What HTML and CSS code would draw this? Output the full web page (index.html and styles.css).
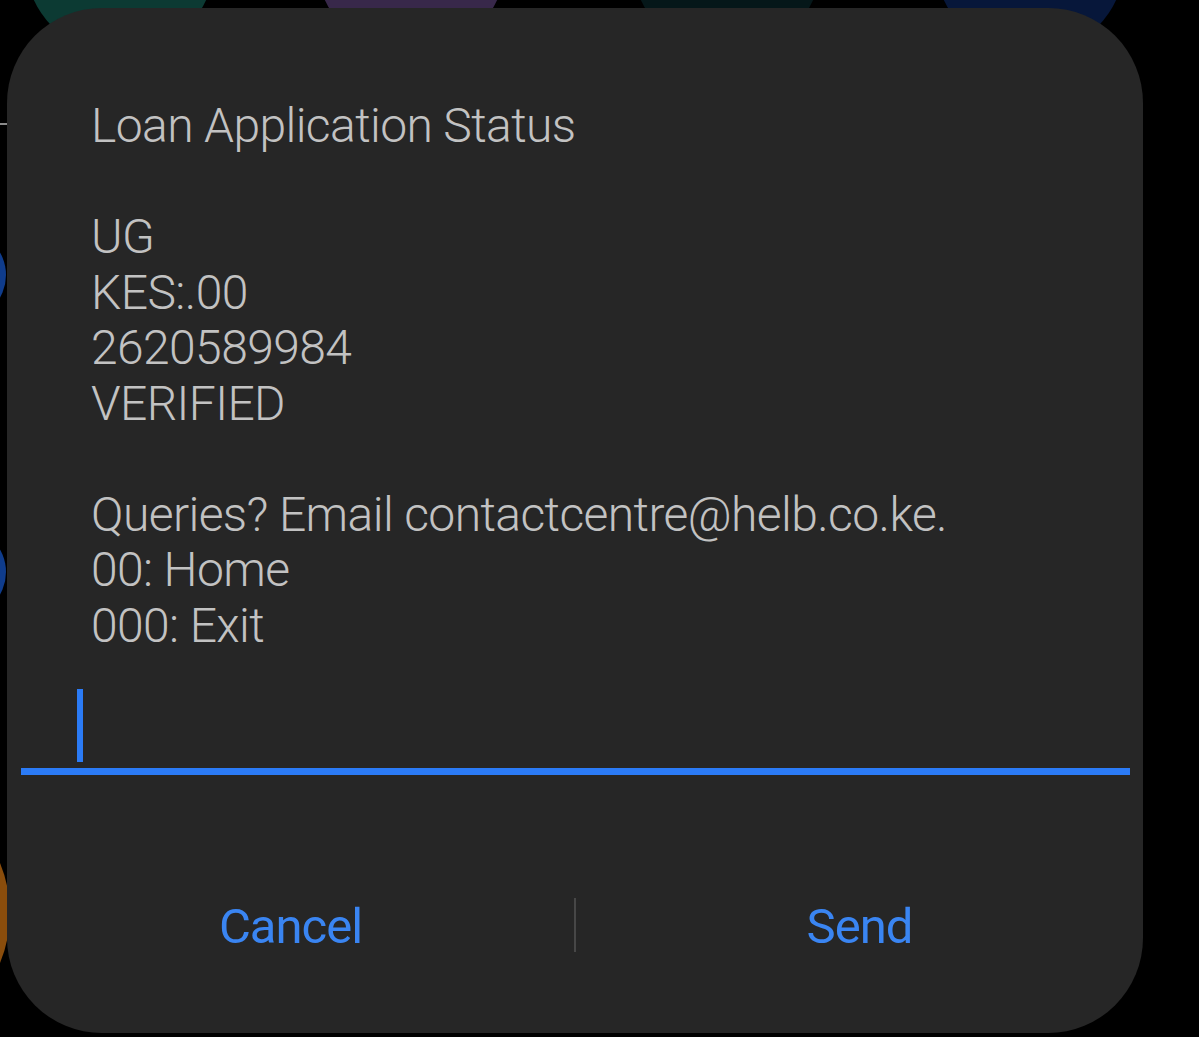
FILE: index.html
```html
<!DOCTYPE html>
<html lang="en">
<head>
  <meta charset="UTF-8">
  <title>Loan Application Status</title>
  <link rel="stylesheet" href="styles.css">
</head>
<body>

  <!-- iconos de la pantalla de inicio, detrás del diálogo -->
  <div class="fondo">
    <span class="icono verde"></span>
    <span class="icono morado"></span>
    <span class="icono turquesa"></span>
    <span class="icono azul-oscuro"></span>
    <span class="icono lado azul1"></span>
    <span class="icono lado azul2"></span>
    <span class="icono lado naranja"></span>
    <span class="marca"></span>
  </div>

  <div class="dialogo">
    <div class="mensaje">
      <div>Loan Application Status</div>
      <div>&nbsp;</div>
      <div>UG</div>
      <div>KES:.00</div>
      <div>2620589984</div>
      <div>VERIFIED</div>
      <div>&nbsp;</div>
      <div>Queries? Email contactcentre@helb.co.ke.</div>
      <div>00: Home</div>
      <div>000: Exit</div>
    </div>

    <div class="campo">
      <span class="cursor"></span>
    </div>

    <div class="botones">
      <button>Cancel</button>
      <span class="separador"></span>
      <button>Send</button>
    </div>
  </div>

</body>
</html>
```

FILE: styles.css
```css
body {
  margin: 0;
  background-color: #000;
  font-family: Roboto, "Liberation Sans", sans-serif;
  height: 1037px;
  overflow: hidden;
  position: relative;
}

.fondo {
  position: absolute;
  inset: 0;
}

.icono {
  position: absolute;
  top: -135px;
  width: 190px;
  height: 190px;
  border-radius: 50%;
}

.verde { left: 25px; background-color: #0c3a33; }
.morado { left: 316px; background-color: #38284a; }
.turquesa { left: 632px; background-color: #051719; }
.azul-oscuro { left: 935px; background-color: #07173a; }

.lado { width: 90px; height: 90px; left: -84px; }
.azul1 { top: 230px; background-color: #0f3c8c; }
.azul2 { top: 527px; background-color: #0f3c8c; }
.naranja { top: 783px; left: -250px; width: 260px; height: 260px; background-color: #8a4d0c; }

.marca {
  position: absolute;
  left: 0;
  top: 123px;
  width: 7px;
  height: 2px;
  background-color: #8a8a8a;
}

.dialogo {
  position: relative;
  margin: 8px 0 0 7px;
  width: 1136px;
  height: 1025px;
  box-sizing: border-box;
  padding-top: 90px;
  background-color: #262626;
  border-radius: 95px;
  display: flex;
  flex-direction: column;
}

.mensaje {
  padding: 0 84px;
  font-size: 48px;
  font-weight: 300;
  line-height: 55.5px;
  letter-spacing: -0.6px;
  color: #c2c2c2;
}

.campo {
  margin: 28px 13px 0 14px;
  height: 87px;
  border-bottom: 7px solid #2b7bf6;
  display: flex;
  align-items: flex-end;
}

.cursor {
  margin: 0 0 6px 56px;
  width: 6px;
  height: 73px;
  background-color: #2b7bf6;
}

.botones {
  margin-top: 123px;
  height: 54px;
  display: flex;
  align-items: center;
}

.botones button {
  flex: 1;
  background: none;
  border: none;
  padding: 4px 0 0;
  font-family: Roboto, "Liberation Sans", sans-serif;
  font-size: 49px;
  line-height: 54px;
  letter-spacing: -1px;
  color: #3a85f2;
  cursor: pointer;
}

.separador {
  width: 2px;
  height: 54px;
  background-color: #474747;
}
```
